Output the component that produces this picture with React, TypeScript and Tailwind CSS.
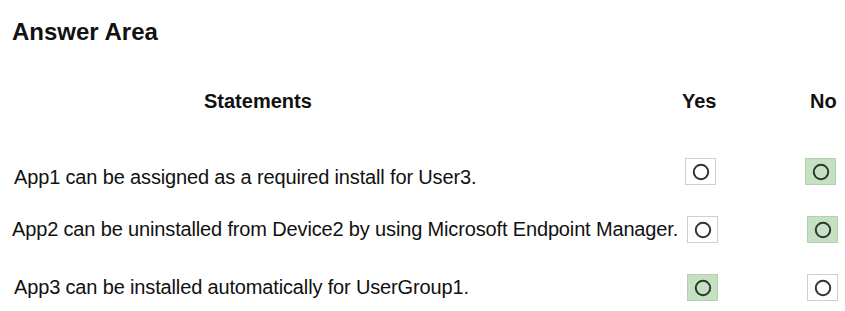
import React from 'react';

type Row = {
  text: string;
  answer: 'yes' | 'no';
  textPl: string;
  textMt: string;
  yesMl: string;
};

const rows: Row[] = [
  { text: 'App1 can be assigned as a required install for User3.', answer: 'no', textPl: 'pl-[2px]', textMt: 'mt-[7px]', yesMl: 'ml-0' },
  { text: 'App2 can be uninstalled from Device2 by using Microsoft Endpoint Manager.', answer: 'no', textPl: 'pl-0', textMt: 'mt-[1px]', yesMl: 'ml-[2px]' },
  { text: 'App3 can be installed automatically for UserGroup1.', answer: 'yes', textPl: 'pl-[2px]', textMt: 'mt-[1px]', yesMl: 'ml-[2px]' },
];

const Choice = ({ selected }: { selected: boolean }) => (
  <div
    className={
      selected
        ? 'w-[31px] h-[27px] flex items-center justify-center border border-[#b3d1b1] bg-[#c4e1c2]'
        : 'w-[31px] h-[27px] flex items-center justify-center border border-[#cfcfcf] bg-white'
    }
  >
    <svg width="18" height="18" viewBox="0 0 18 18">
      <circle cx="9" cy="9" r="7.2" fill="none" stroke="#333" strokeWidth="2" />
    </svg>
  </div>
);

export default function App() {
  return (
    <div
      className="w-[845px] h-[311px] bg-white text-[#111] pl-[12px] overflow-hidden"
      style={{ fontFamily: '"Liberation Sans", Arial, sans-serif' }}
    >
      <h1 className="pt-[18px] text-[24px] leading-[28px] font-bold">Answer Area</h1>

      <div className="flex items-start mt-[43px] text-[20px] leading-[24px] font-bold">
        <div className="w-[670px] pl-[192px]">Statements</div>
        <div className="w-[128px]">Yes</div>
        <div>No</div>
      </div>

      <div className="flex flex-col mt-[45px] gap-[31px]">
        {rows.map((row, i) => (
          <div key={i} className="flex items-start h-[27px]">
            <div className={`w-[673px] text-[20px] leading-[24px] tracking-[-0.15px] whitespace-nowrap ${row.textPl} ${row.textMt}`}>
              {row.text}
            </div>
            <div className={`w-[120px] ${row.yesMl}`}>
              <Choice selected={row.answer === 'yes'} />
            </div>
            <Choice selected={row.answer === 'no'} />
          </div>
        ))}
      </div>
    </div>
  );
}
